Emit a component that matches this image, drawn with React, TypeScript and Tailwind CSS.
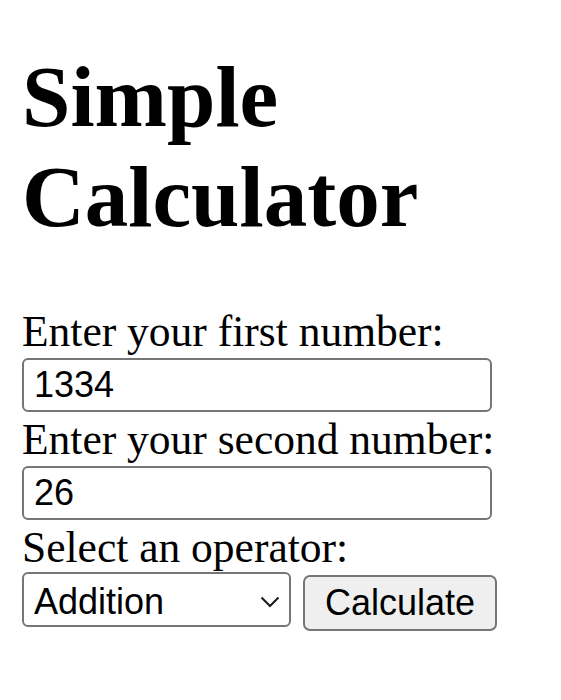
import React from "react";

export default function App() {
  const serif = { fontFamily: '"Liberation Serif", "Times New Roman", serif' };
  return (
    <div className="min-h-[700px] bg-white px-[22px] pt-[47px] text-black" style={serif}>
      <h1 className="text-[87px] font-bold leading-[100px]">Simple Calculator</h1>
      <form className="mt-[59px] flex flex-col items-start" onSubmit={(e) => e.preventDefault()}>
        <label htmlFor="n1" className="block h-[50px] text-[43.5px] leading-[50px]">
          Enter your first number:
        </label>
        <input
          id="n1"
          defaultValue="1334"
          className="mt-[2px] box-border h-[54px] w-[470px] rounded-[6px] border-[2px] border-[#767676] bg-white px-[10px] font-['Liberation_Sans',Arial,sans-serif] text-[36px] leading-none text-black outline-none"
        />
        <label htmlFor="n2" className="mt-[2px] block h-[50px] text-[43.5px] leading-[50px]">
          Enter your second number:
        </label>
        <input
          id="n2"
          defaultValue="26"
          className="mt-[2px] box-border h-[54px] w-[470px] rounded-[6px] border-[2px] border-[#767676] bg-white px-[10px] font-['Liberation_Sans',Arial,sans-serif] text-[36px] leading-none text-black outline-none"
        />
        <label htmlFor="op" className="mt-[2px] block h-[50px] text-[43.5px] leading-[50px]">
          Select an operator:
        </label>
        <div className="flex items-start gap-[12px]">
          <div className="relative">
            <select
              id="op"
              defaultValue="add"
              className="box-border h-[55px] w-[269px] appearance-none rounded-[6px] border-[2px] border-[#767676] bg-white pl-[10px] pt-[4px] font-['Liberation_Sans',Arial,sans-serif] text-[36px] leading-none text-black outline-none"
            >
              <option value="add">Addition</option>
              <option value="sub">Subtraction</option>
              <option value="mul">Multiplication</option>
              <option value="div">Division</option>
            </select>
            <svg
              className="pointer-events-none absolute left-[238px] top-[24px]"
              width="20"
              height="12"
              viewBox="0 0 20 12"
              fill="none"
            >
              <path d="M1.5 1.5 L10 10 L18.5 1.5" stroke="#1a1a1a" strokeWidth="2" />
            </svg>
          </div>
          <button
            type="submit"
            className="mt-[3px] box-border h-[56px] w-[194px] rounded-[7px] border-[2px] border-[#767676] bg-[#efefef] font-['Liberation_Sans',Arial,sans-serif] text-[36px] leading-none text-black"
          >
            Calculate
          </button>
        </div>
      </form>
    </div>
  );
}
